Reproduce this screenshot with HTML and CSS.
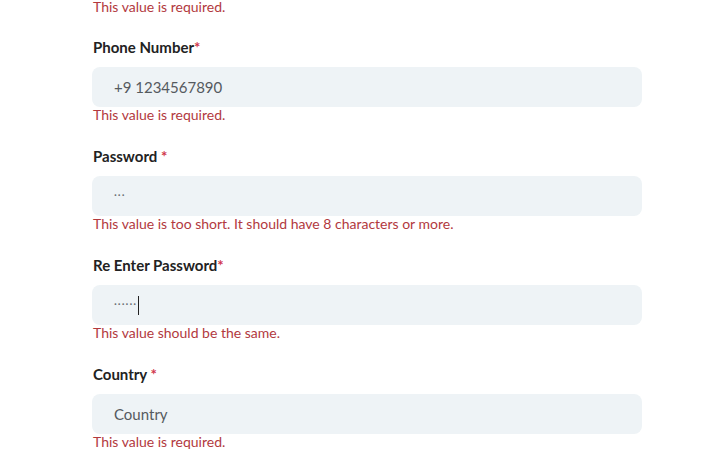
FILE: index.html
```html
<!DOCTYPE html>
<html>
<head>
<meta charset="utf-8">
<link rel="stylesheet" href="styles.css">
</head>
<body>
<form class="form">
  <p class="error first">This value is required.</p>

  <div class="field">
    <label class="label">Phone Number<span class="req">*</span></label>
    <div class="input"><span class="value">+9 1234567890</span></div>
    <p class="error">This value is required.</p>
  </div>

  <div class="field">
    <label class="label">Password <span class="req">*</span></label>
    <div class="input"><span class="dots">···</span></div>
    <p class="error">This value is too short. It should have 8 characters or more.</p>
  </div>

  <div class="field">
    <label class="label">Re Enter Password<span class="req">*</span></label>
    <div class="input"><span class="dots">······</span><span class="caret"></span></div>
    <p class="error">This value should be the same.</p>
  </div>

  <div class="field">
    <label class="label">Country <span class="req">*</span></label>
    <div class="input"><span class="value">Country</span></div>
    <p class="error">This value is required.</p>
  </div>
</form>
</body>
</html>
```
FILE: styles.css
```css
html, body {
  margin: 0;
  padding: 0;
  background: #ffffff;
}
body {
  font-family: Lato, "Open Sans", sans-serif;
}
.form {
  width: 550px;
  margin-left: 92px;
  display: flex;
  flex-direction: column;
}
.error {
  margin: 0;
  padding-left: 1px;
  font-size: 14px;
  line-height: 16px;
  height: 16px;
  color: #b2393e;
}
.error.first {
  margin-top: -1px;
}
.field {
  margin-top: 22px;
  display: flex;
  flex-direction: column;
}
.field + .field {
  margin-top: 23px;
}
.label {
  display: block;
  padding-left: 1px;
  font-size: 15px;
  font-weight: 700;
  line-height: 20px;
  height: 20px;
  color: #222222;
  margin-bottom: 10px;
}
.req {
  color: #d0364b;
}
.input {
  height: 40px;
  box-sizing: border-box;
  border-radius: 8px;
  background: #eef3f6;
  padding-left: 22px;
  display: flex;
  align-items: center;
  font-size: 15px;
  color: #555a5f;
}
.dots {
  font-size: 11px;
  letter-spacing: 1px;
  color: #666b70;
  margin-top: -4px;
}
.caret {
  display: inline-block;
  width: 1px;
  height: 19px;
  background: #222;
  margin-left: 1px;
}
```
